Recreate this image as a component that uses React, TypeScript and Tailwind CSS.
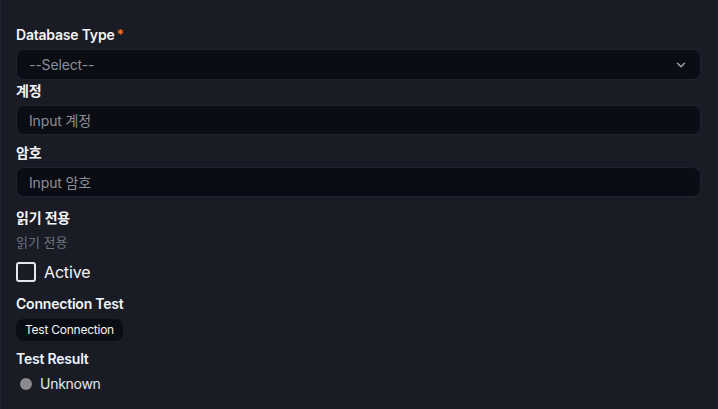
import { ChevronDown } from 'lucide-react';

const font = { fontFamily: 'Inter, "Noto Sans CJK KR", sans-serif' };

function Label({ children, required }: { children: React.ReactNode; required?: boolean }) {
  return (
    <div className="text-sm leading-5 font-semibold tracking-[-0.015em] text-[#f3f4f6]">
      {children}
      {required && <span className="ml-0.5 text-[#f97316]">*</span>}
    </div>
  );
}

function TextInput({ placeholder }: { placeholder: string }) {
  return (
    <input
      placeholder={placeholder}
      className="mt-1 h-[30px] w-full rounded-lg border border-[#1c2134] bg-[#0a0d14] px-3 text-sm tracking-[-0.01em] text-[#e5e7eb] placeholder:text-[#8b8f99] outline-none"
    />
  );
}

export default function App() {
  return (
    <div
      className="min-h-[409px] w-full border-x border-[#1c2238] bg-[#191c25] pl-[15px] pr-4 pt-[25px] pb-4"
      style={font}
    >
      {/* Database Type */}
      <div>
        <Label required>Database Type</Label>
        <div className="mt-1 flex h-[31px] w-full items-center justify-between rounded-lg border border-[#1c2134] bg-[#0a0d14] pl-3 pr-3">
          <span className="text-sm tracking-[-0.01em] text-[#8b8f99]">--Select--</span>
          <ChevronDown className="h-3.5 w-3.5 text-[#9ca3af]" strokeWidth={2.5} />
        </div>
      </div>

      {/* 계정 */}
      <div className="mt-px">
        <Label>계정</Label>
        <TextInput placeholder="Input 계정" />
      </div>

      {/* 암호 */}
      <div className="mt-2">
        <Label>암호</Label>
        <TextInput placeholder="Input 암호" />
      </div>

      {/* 읽기 전용 */}
      <div className="mt-[11px]">
        <Label>읽기 전용</Label>
        <div className="mt-1 text-[13px] leading-5 text-[#6b7280]">읽기 전용</div>
      </div>

      {/* Active */}
      <label className="mt-[10px] flex items-center gap-2">
        <span className="h-5 w-5 rounded-[3px] border-2 border-[#e5e7eb]" />
        <span className="text-base leading-5 tracking-[-0.01em] text-[#f3f4f6]">Active</span>
      </label>

      {/* Connection Test */}
      <div className="mt-3">
        <Label>Connection Test</Label>
        <button className="mt-[5px] h-[22px] rounded-lg bg-[#0a0d14] px-[9px] text-xs tracking-[-0.02em] text-[#f3f4f6]">
          Test Connection
        </button>
      </div>

      {/* Test Result */}
      <div className="mt-2">
        <Label>Test Result</Label>
        <div className="mt-[5px] flex h-5 items-center gap-2 pl-1">
          <span className="h-3 w-3 rounded-full bg-[#8a8a8e]" />
          <span className="text-sm tracking-[-0.02em] text-[#e5e7eb]">Unknown</span>
        </div>
      </div>
    </div>
  );
}
